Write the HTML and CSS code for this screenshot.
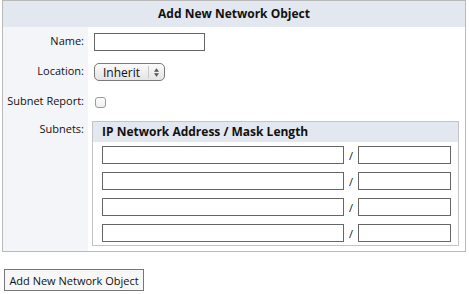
FILE: index.html
```html
<!DOCTYPE html>
<html lang="en">
<head>
  <meta charset="UTF-8">
  <title>Add New Network Object</title>
  <link rel="stylesheet" href="styles.css">
</head>
<body>
  <div class="panel">
    <div class="panel-title">Add New Network Object</div>

    <div class="row">
      <div class="label">Name:</div>
      <div class="field"><input type="text" class="text-input name-input"></div>
    </div>

    <div class="row">
      <div class="label">Location:</div>
      <div class="field">
        <div class="select">
          <span class="select-value">Inherit</span>
          <span class="select-arrows">
            <svg viewBox="0 0 6 10" width="5" height="9">
              <polygon points="0,4 6,4 3,0" fill="#555" />
              <polygon points="0,6 6,6 3,10" fill="#555" />
            </svg>
          </span>
        </div>
      </div>
    </div>

    <div class="row">
      <div class="label">Subnet Report:</div>
      <div class="field"><span class="checkbox"></span></div>
    </div>

    <div class="row subnets-row">
      <div class="label">Subnets:</div>
      <div class="field">
        <div class="subnets">
          <div class="subnets-title">IP Network Address / Mask Length</div>
          <div class="subnet-line">
            <input type="text" class="text-input addr-input">
            <span class="slash">/</span>
            <input type="text" class="text-input mask-input">
          </div>
          <div class="subnet-line">
            <input type="text" class="text-input addr-input">
            <span class="slash">/</span>
            <input type="text" class="text-input mask-input">
          </div>
          <div class="subnet-line">
            <input type="text" class="text-input addr-input">
            <span class="slash">/</span>
            <input type="text" class="text-input mask-input">
          </div>
          <div class="subnet-line">
            <input type="text" class="text-input addr-input">
            <span class="slash">/</span>
            <input type="text" class="text-input mask-input">
          </div>
        </div>
      </div>
    </div>
  </div>

  <button class="submit">Add New Network Object</button>
</body>
</html>
```

FILE: styles.css
```css
* {
  margin: 0;
  padding: 0;
  box-sizing: border-box;
}

body {
  font-family: "Open Sans", Arial, sans-serif;
  font-size: 11px;
  color: #111;
  background: #ffffff;
}

/* main box */
.panel {
  width: 464px;
  margin-left: 2px;
  border: 1px solid #b9b9b9;
}

.panel-title {
  height: 26px;
  line-height: 26px;
  background: #e3e7ef;
  text-align: center;
  font-size: 12px;
  font-weight: bold;
}

.row {
  display: flex;
  min-height: 30px;
}

.label {
  width: 85px;
  flex-shrink: 0;
  background: #f4f5f9;
  white-space: nowrap;
  padding: 0 4px 3px 0;
  display: flex;
  align-items: center;
  justify-content: flex-end;
}

.field {
  flex: 1;
  display: flex;
  align-items: center;
  padding-left: 6px;
}

.text-input {
  height: 18px;
  border: 1px solid #666;
  background: #fff;
  font: inherit;
}

.name-input {
  width: 111px;
}

/* mac style popup */
.select {
  display: flex;
  align-items: center;
  width: 71px;
  height: 18px;
  border: 1px solid #7a7a7a;
  border-radius: 5px;
  background: linear-gradient(#fbfbfb, #e4e4e4);
  font-size: 12px;
}

.select-value {
  flex: 1;
  padding-left: 8px;
}

.select-arrows {
  width: 16px;
  height: 12px;
  border-left: 1px solid #c8c8c8;
  display: flex;
  align-items: center;
  justify-content: center;
}

.checkbox {
  display: block;
  width: 11px;
  height: 11px;
  margin-left: 1px;
  border: 1px solid #9a9a9a;
  border-radius: 3px;
  background: linear-gradient(#ffffff, #eeeeee);
}

/* subnets block */
.subnets-row .label {
  align-items: flex-start;
  padding-top: 4px;
}

.subnets-row .field {
  align-items: flex-start;
  padding: 4px 6px 5px 4px;
}

.subnets {
  width: 367px;
  border: 1px solid #c4c4c4;
  padding-bottom: 3px;
}

.subnets-title {
  height: 20px;
  line-height: 20px;
  background: #e3e7ef;
  font-size: 12px;
  font-weight: bold;
  padding-left: 9px;
  margin-bottom: 4px;
}

.subnet-line {
  display: flex;
  align-items: center;
  padding-left: 9px;
  margin-bottom: 8px;
}

.subnet-line:last-child {
  margin-bottom: 0;
}

.addr-input {
  width: 242px;
}

.slash {
  width: 14px;
  text-align: center;
}

.mask-input {
  width: 93px;
}

.submit {
  display: block;
  margin: 17px 0 0 4px;
  width: 140px;
  height: 22px;
  padding: 0;
  border: 1px solid #777;
  background: #f7f7f7;
  font: inherit;
  font-size: 11px;
  color: #111;
  white-space: nowrap;
}
```
